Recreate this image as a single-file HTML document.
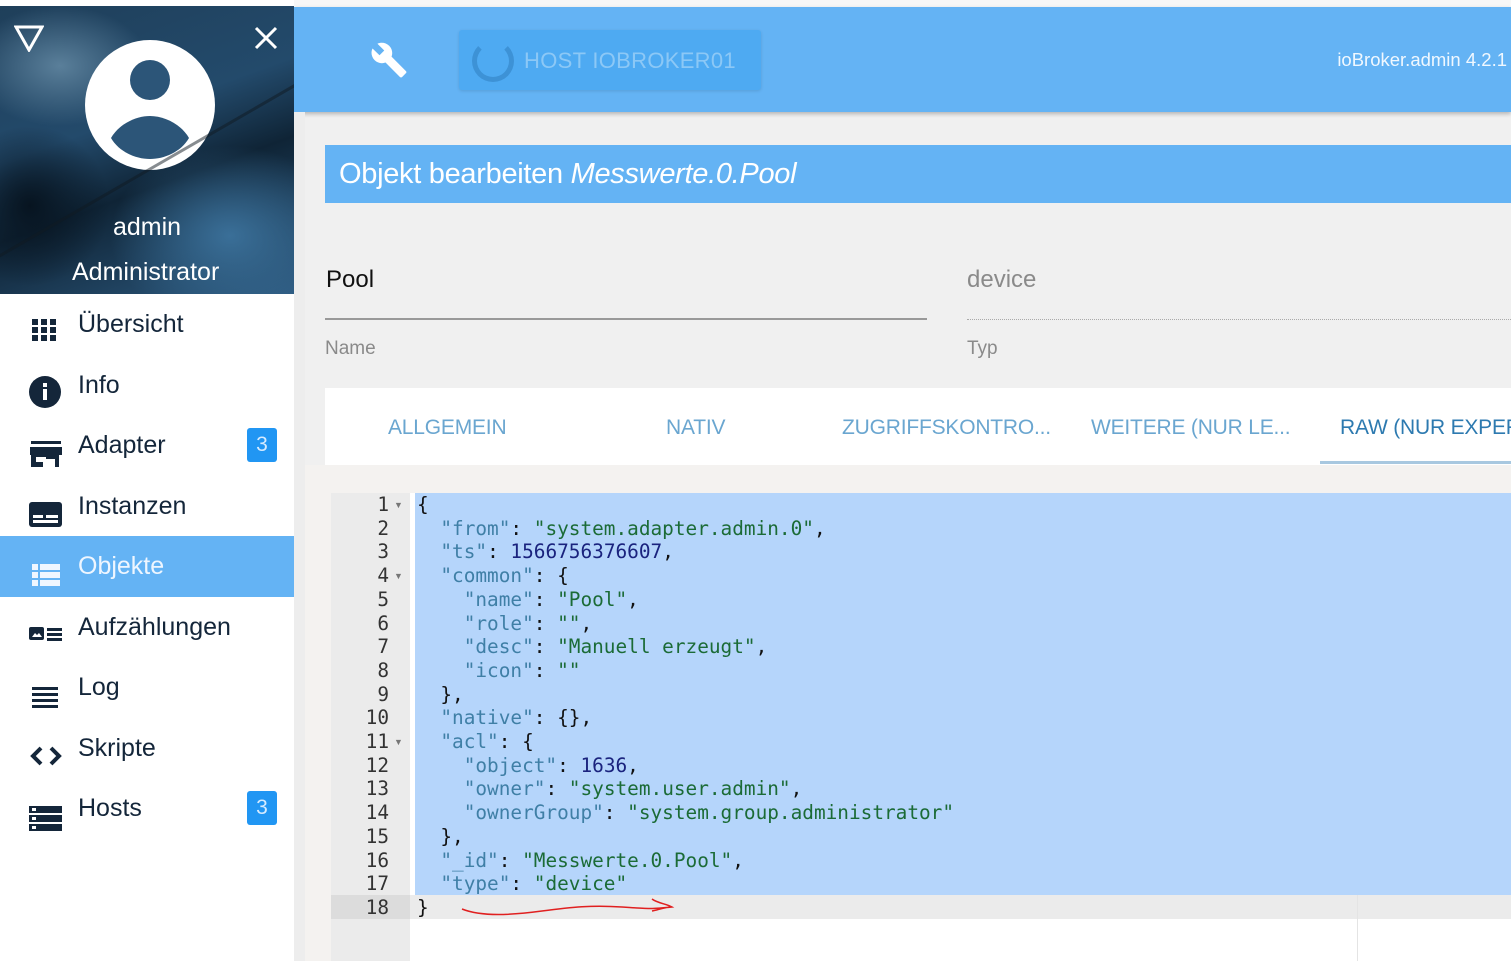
<!DOCTYPE html>
<html><head><meta charset="utf-8">
<style>
*{margin:0;padding:0;box-sizing:border-box}
body{width:1511px;height:961px;overflow:hidden;background:#f0f0f0;font-family:"Liberation Sans",sans-serif;position:relative}
.top{position:absolute;left:0;top:0;width:1511px;height:7px;background:#f7f7f7}
.hdr{position:absolute;left:294px;top:7px;width:1217px;height:105px;background:#64b3f4;box-shadow:0 2px 4px rgba(0,0,0,.25)}
.side{position:absolute;left:0;top:0;width:294px;height:961px;background:#fff}
.img{position:absolute;left:0;top:6px;width:294px;height:288px;background:
radial-gradient(ellipse 90px 60px at 60px 60px,#5a7f9a,transparent),
radial-gradient(ellipse 120px 90px at 230px 230px,#3a6f98,transparent),
radial-gradient(ellipse 80px 80px at 30px 200px,#071420,transparent),
linear-gradient(160deg,#1f3f5a 0%,#234a6b 40%,#0f2436 60%,#2d5a80 100%);overflow:hidden}
.img:after{content:"";position:absolute;left:-40px;top:150px;width:420px;height:3px;background:rgba(16,26,34,.5);transform:rotate(-30deg)}
.menu{position:absolute;left:0;top:294px;width:294px}
.mi{height:60.5px;position:relative;color:#14263a;font-size:25px}
.mi span{position:absolute;left:78px;top:16px}
.mi svg{position:absolute;left:29px;top:20px}
.mi.act{background:#64b3f4;color:#eef6ff}
.badge{position:absolute;left:247px;top:428px;width:30px;height:34px;background:#2196f3;color:#d6ebff;font-size:21px;text-align:center;line-height:34px;border-radius:3px}
.title{position:absolute;left:325px;top:145px;width:1186px;height:58px;background:#64b3f4;color:#fff;font-size:29px;line-height:58px;padding-left:14px;letter-spacing:-.3px}
.lbl{position:absolute;font-size:19px;color:#8a8a8a}
.tabs{position:absolute;left:325px;top:388px;width:1186px;height:77px;background:#fff}
.tab{position:absolute;top:28px;font-size:21px;color:#6aa6d0;letter-spacing:-.2px;white-space:nowrap}
.edwrap{position:absolute;left:305px;top:465px;width:1206px;height:496px;background:#f4f2f0}
.gut{position:absolute;left:331px;top:493px;width:79px;height:468px;background:#ebebeb}
.code{position:absolute;left:410px;top:493px;width:1101px;height:468px;background:#fff}
.sel{position:absolute;left:415px;top:493px;width:1096px;height:402px;background:#b5d5fb}
.act18{position:absolute;left:331px;top:895px;width:1180px;height:24px;background:#ebebeb}
.act18g{position:absolute;left:331px;top:895px;width:79px;height:24px;background:#dcdcdc}
.ln,.cl{position:absolute;font-family:"DejaVu Sans Mono","Liberation Mono",monospace;font-size:19.4px;line-height:23.7px;white-space:pre}
.ln{left:331px;width:58px;text-align:right;top:493px;color:#333}
.cl{left:417px;top:493px;color:#111}
.k{color:#3f7fa6}.s{color:#1b6b36}.n{color:#1a237e}
.fold{position:absolute;left:394px;font-size:9px;color:#777}
</style></head><body>
<div class="top"></div>
<div class="hdr">
<svg style="position:absolute;left:76px;top:34px" width="38" height="38" viewBox="0 0 24 24"><path fill="#fff" d="M22.7 19l-9.1-9.1c.9-2.3.4-5-1.5-6.9-2-2-5-2.4-7.4-1.3L9 6 6 9 1.6 4.7C.4 7.1.9 10.1 2.9 12.1c1.9 1.9 4.6 2.4 6.9 1.5l9.1 9.1c.4.4 1 .4 1.4 0l2.3-2.3c.5-.4.5-1.1.1-1.4z"/></svg>
<div style="position:absolute;left:165px;top:23px;width:302px;height:60px;background:#4eaaf2;border-radius:3px;box-shadow:0 1px 3px rgba(0,0,0,.12)">
<div style="position:absolute;left:13px;top:10px;width:42px;height:42px;border:5px solid #3d92d6;border-top-color:transparent;border-radius:50%"></div>
<div style="position:absolute;left:65px;top:18px;color:#8cc8f6;font-size:22px;letter-spacing:.3px">HOST IOBROKER01</div></div>
<div style="position:absolute;right:4px;top:42px;color:#f0f8ff;font-size:18.5px">ioBroker.admin 4.2.1</div>
</div>
<div class="side">
<div class="img">
<svg style="position:absolute;left:14px;top:18px" width="30" height="28" viewBox="0 0 30 28"><path d="M2 3h26L15 26z" fill="none" stroke="#fff" stroke-width="3"/></svg>
<svg style="position:absolute;left:254px;top:20px" width="24" height="24" viewBox="0 0 24 24"><path d="M2 2L22 22M22 2L2 22" stroke="#fff" stroke-width="3"/></svg>
<svg style="position:absolute;left:85px;top:34px" width="130" height="130" viewBox="0 0 130 130"><circle cx="65" cy="65" r="65" fill="#fff"/><circle cx="65" cy="40" r="20" fill="#2c5578"/><path d="M26 98c8-14 25-22 39-22s31 8 39 22c-8 14-25 21-39 21s-31-7-39-21z" fill="#2c5578"/></svg>
<div style="position:absolute;left:0;width:294px;text-align:center;top:207px;color:#fff;font-size:25px">admin</div>
<div style="position:absolute;left:72px;top:252px;color:#fff;font-size:25px">Administrator</div>
</div>
<div class="menu">
<div class="mi"><svg width="30" height="30" viewBox="0 0 30 30" fill="#14263a"><rect x="3" y="5" width="6" height="6"/><rect x="12" y="5" width="6" height="6"/><rect x="21" y="5" width="6" height="6"/><rect x="3" y="13" width="6" height="6"/><rect x="12" y="13" width="6" height="6"/><rect x="21" y="13" width="6" height="6"/><rect x="3" y="21" width="6" height="6"/><rect x="12" y="21" width="6" height="6"/><rect x="21" y="21" width="6" height="6"/></svg><span>Übersicht</span></div>
<div class="mi"><svg width="34" height="34" viewBox="0 0 34 34"><circle cx="16" cy="17" r="16" fill="#14263a"/><rect x="14" y="14" width="4" height="11" fill="#fff"/><rect x="14" y="8" width="4" height="4" fill="#fff"/></svg><span>Info</span></div>
<div class="mi"><svg width="34" height="34" viewBox="0 0 34 34" fill="#14263a"><rect x="2" y="6" width="30" height="3"/><path d="M1 12h32v8h-3v12h-4v-8h-12v8h-12v-12h-1z"/><rect x="7" y="22" width="10" height="5" fill="#fff"/></svg><span>Adapter</span></div>
<div class="mi"><svg width="34" height="34" viewBox="0 0 34 34"><rect x="0" y="6" width="33" height="25" rx="3" fill="#14263a"/><rect x="4" y="19" width="10" height="3" fill="#fff"/><rect x="17" y="19" width="12" height="3" fill="#fff"/><rect x="4" y="24" width="25" height="3" fill="#fff"/></svg><span>Instanzen</span></div>
<div class="mi act"><svg width="34" height="34" viewBox="0 0 34 34" fill="#eef6ff"><rect x="3" y="8" width="6" height="6"/><rect x="11" y="8" width="20" height="6"/><rect x="3" y="16" width="6" height="6"/><rect x="11" y="16" width="20" height="6"/><rect x="3" y="24" width="6" height="6"/><rect x="11" y="24" width="20" height="6"/></svg><span>Objekte</span></div>
<div class="mi"><svg width="34" height="34" viewBox="0 0 34 34" fill="#14263a"><rect x="0" y="10" width="15" height="13" rx="2"/><path d="M3 20l3-4 2 2 2-2 3 4z" fill="#fff"/><rect x="18" y="11" width="15" height="3"/><rect x="18" y="16" width="15" height="3"/><rect x="18" y="21" width="15" height="3"/></svg><span>Aufzählungen</span></div>
<div class="mi"><svg width="34" height="34" viewBox="0 0 34 34" fill="#14263a"><rect x="3" y="10" width="26" height="3"/><rect x="3" y="16" width="26" height="3"/><rect x="3" y="22" width="26" height="3"/><rect x="3" y="28" width="26" height="3"/></svg><span>Log</span></div>
<div class="mi"><svg width="34" height="34" viewBox="0 0 34 34"><path d="M12 10l-8 8 8 8M22 10l8 8-8 8" fill="none" stroke="#14263a" stroke-width="4"/></svg><span>Skripte</span></div>
<div class="mi"><svg width="34" height="34" viewBox="0 0 34 34"><rect x="0" y="8" width="33" height="7" fill="#14263a"/><rect x="0" y="17" width="33" height="7" fill="#14263a"/><rect x="0" y="26" width="33" height="7" fill="#14263a"/><rect x="3" y="10" width="4" height="3" fill="#fff"/><rect x="3" y="19" width="4" height="3" fill="#fff"/><rect x="3" y="28" width="4" height="3" fill="#fff"/></svg><span>Hosts</span></div>
</div>
<div class="badge">3</div>
<div class="badge" style="top:791px">3</div>
</div>
<div style="position:absolute;left:294px;top:112px;width:11px;height:849px;background:#ededed"></div>
<div class="title">Objekt bearbeiten <i>Messwerte.0.Pool</i></div>
<div class="lbl" style="left:326px;top:266px;color:#111;font-size:24px">Pool</div>
<div style="position:absolute;left:325px;top:318px;width:602px;height:2px;background:#999"></div>
<div class="lbl" style="left:325px;top:338px">Name</div>
<div class="lbl" style="left:967px;top:266px;font-size:24px">device</div>
<div style="position:absolute;left:967px;top:319px;width:544px;border-top:1px dotted #aaa"></div>
<div class="lbl" style="left:967px;top:338px">Typ</div>
<div class="tabs">
<div class="tab" style="left:63px">ALLGEMEIN</div>
<div class="tab" style="left:341px">NATIV</div>
<div class="tab" style="left:517px">ZUGRIFFSKONTRO...</div>
<div class="tab" style="left:766px">WEITERE (NUR LE...</div>
<div class="tab" style="left:1015px;color:#2d7ab0">RAW (NUR EXPERTEN)</div>
<div style="position:absolute;left:995px;top:73px;width:191px;height:3px;background:#a8c8e0"></div>
</div>
<div class="edwrap"></div>
<div class="gut"></div>
<div class="code"></div>
<div class="act18"></div><div class="act18g"></div>
<div class="sel"></div>
<div style="position:absolute;left:1357px;top:895px;width:1px;height:66px;background:#e4e4e4"></div>
<div class="ln">1
2
3
4
5
6
7
8
9
10
11
12
13
14
15
16
17
18</div>
<div class="fold" style="top:500px">▼</div>
<div class="fold" style="top:571px">▼</div>
<div class="fold" style="top:737px">▼</div>
<div class="cl">{
  <span class="k">"from"</span>: <span class="s">"system.adapter.admin.0"</span>,
  <span class="k">"ts"</span>: <span class="n">1566756376607</span>,
  <span class="k">"common"</span>: {
    <span class="k">"name"</span>: <span class="s">"Pool"</span>,
    <span class="k">"role"</span>: <span class="s">""</span>,
    <span class="k">"desc"</span>: <span class="s">"Manuell erzeugt"</span>,
    <span class="k">"icon"</span>: <span class="s">""</span>
  },
  <span class="k">"native"</span>: {},
  <span class="k">"acl"</span>: {
    <span class="k">"object"</span>: <span class="n">1636</span>,
    <span class="k">"owner"</span>: <span class="s">"system.user.admin"</span>,
    <span class="k">"ownerGroup"</span>: <span class="s">"system.group.administrator"</span>
  },
  <span class="k">"_id"</span>: <span class="s">"Messwerte.0.Pool"</span>,
  <span class="k">"type"</span>: <span class="s">"device"</span>
}</div>
<svg style="position:absolute;left:455px;top:895px" width="230" height="30" viewBox="0 0 230 30"><path d="M7 14c20 8 50 6 80 2s50-6 80-4 30 2 50 0c-5-3-15-4-20-8m20 8c-8 0-14 3-20 4" fill="none" stroke="#e02020" stroke-width="1.5"/></svg>
</body></html>
